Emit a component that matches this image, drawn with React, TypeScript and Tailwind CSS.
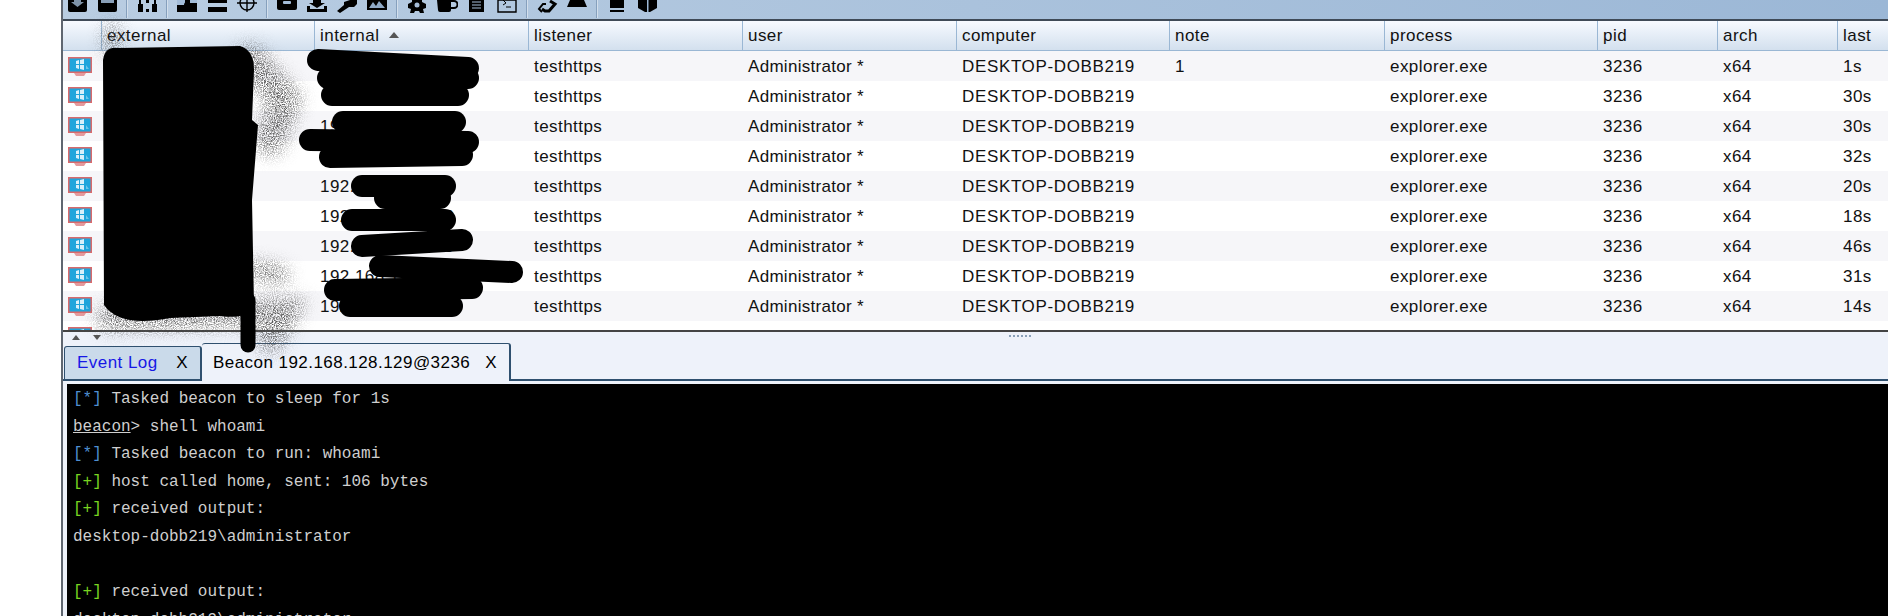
import type { ReactNode } from "react"

const columns = [
  { name: "", width: "w-[38px]" },
  { name: "external", width: "w-[213px]" },
  { name: "internal", width: "w-[214px]" },
  { name: "listener", width: "w-[214px]" },
  { name: "user", width: "w-[214px]" },
  { name: "computer", width: "w-[213px]" },
  { name: "note", width: "w-[215px]" },
  { name: "process", width: "w-[213px]" },
  { name: "pid", width: "w-[120px]" },
  { name: "arch", width: "w-[120px]" },
  { name: "last", width: "flex-1" },
]

const rows = [
  { internal: "", note: "1", last: "1s" },
  { internal: "", note: "", last: "30s" },
  { internal: "192.168.128.129", note: "", last: "30s" },
  { internal: "", note: "", last: "32s" },
  { internal: "192.168.128.129", note: "", last: "20s" },
  { internal: "192.168.128.129", note: "", last: "18s" },
  { internal: "192.168.128.129", note: "", last: "46s" },
  { internal: "192.168.128.129", note: "", last: "31s" },
  { internal: "192.168.128.129", note: "", last: "14s" },
  { internal: "", note: "", last: "" },
]

function MonitorIcon() {
  return (
    <svg width="26" height="22" viewBox="0 0 26 22">
      <rect x="1" y="1" width="24" height="16" fill="#d86a6c" />
      <rect x="2.5" y="2.5" width="21" height="13" fill="#1fa5dc" />
      <path d="M9 5l3-1v4H9zM13 4l4-1v5h-4zM9 9h3v4l-3-1zM13 9h4v5l-4-1z" fill="#d8f0fa" />
      <path d="M19 9l3 4h-3z" fill="#6cc3e8" />
      <path d="M7 17h12l-2 3H9z" fill="#e59a9c" />
    </svg>
  )
}

function Tool({ children }: { children: ReactNode }) {
  return (
    <svg className="shrink-0" width="21" height="14" viewBox="0 0 21 14">
      {children}
    </svg>
  )
}

function Sep() {
  return <div className="h-[18px] w-[1px] shrink-0 bg-[#d3dfec] shadow-[-1px_0_0_#86a0bd]" />
}

function Toolbar() {
  return (
    <div className="flex h-[21px] shrink-0 items-start gap-[9px] border-b-2 border-[#3f4a57] bg-gradient-to-r from-[#b9cde2] to-[#9bb7d6] pl-[4px]">
      <Tool><path d="M1 0h19v10a2 2 0 0 1-2 2H3a2 2 0 0 1-2-2z" fill="#000" /><path d="M7 0h7v2h3l-6.500 5L4 2h3z" fill="#7f93a8" /></Tool>
      <Tool><path d="M1 0h19v10a2 2 0 0 1-2 2H3a2 2 0 0 1-2-2z" fill="#000" /><rect x="4" y="0" width="13" height="3" fill="#8aa0b8" /></Tool>
      <Sep />
      <Tool><path d="M1 4h5v8H1zM15 4h5v8h-5z" fill="#000" /><path d="M3 5V0M18 5V0" stroke="#000" strokeWidth="2" /><path d="M9 0h3v3H9zM9 9h3v3H9z" fill="#000" /></Tool>
      <Sep />
      <Tool><path d="M0 0h20v12H0z" fill="#000" /><path d="M0 0h8v5H0zM13 0h7v3h-7z" fill="#a3bcd8" /><circle cx="10" cy="5" r="3" fill="#000" /></Tool>
      <Tool><path d="M1 0h19v3H1zM1 7h19v5H1z" fill="#000" /></Tool>
      <Tool><circle cx="10" cy="3" r="7" fill="none" stroke="#000" strokeWidth="1.400" /><path d="M10 0v12M0 3h20" stroke="#000" strokeWidth="1.400" /></Tool>
      <Sep />
      <Tool><path d="M0 0h20v8a2 2 0 0 1-2 2H2a2 2 0 0 1-2-2z" fill="#000" /><rect x="6" y="1" width="8" height="3" rx="1" fill="#a3bcd8" /></Tool>
      <Tool><path d="M6 0h8v3h4l-8 5-8-5h4z" fill="#000" /><path d="M0 6h3v3h14V6h3v6H0z" fill="#000" /></Tool>
      <Tool><path d="M13 0h7v4l-3 3h-5L3 13 0 11l7-6V2z" fill="#000" /></Tool>
      <Tool><path d="M0 0h20v10H0z" fill="#000" /><path d="M2 8l4-6 3 4 3-5 6 7z" fill="#8ea8c4" /></Tool>
      <Sep />
      <Tool><path d="M5 0h10v2l4 2v4l-3 1 1 4h-4l-1-2H8l-1 2H3l1-4-3-1V4l4-2z" fill="#000" /><circle cx="10" cy="5" r="2.500" fill="#a6bdd8" /></Tool>
      <Tool><path d="M0 0h14v10a2 2 0 0 1-2 2H3a2 2 0 0 1-2-2z" fill="#000" /><path d="M14 1h3a2 2 0 0 1 0 7h-3" fill="none" stroke="#000" strokeWidth="2" /></Tool>
      <Tool><path d="M2 0h15v12H2z" fill="#000" /><path d="M5 2h9M5 5h9M5 8h9" stroke="#a6bdd8" /></Tool>
      <Tool><path d="M1 0h18v12H1z" fill="none" stroke="#000" strokeWidth="1.400" /><path d="M6 0l3 3-3 2M9 7h5" stroke="#000" fill="none" /></Tool>
      <Sep />
      <Tool><path d="M13 1l5 3-6 7H8L5 9" fill="none" stroke="#000" strokeWidth="3" /><path d="M9 4H6l-4 5 3 3" fill="none" stroke="#000" strokeWidth="2" /></Tool>
      <Tool><path d="M3 0h14l3 7H0z" fill="#000" /></Tool>
      <Sep />
      <Tool><path d="M3 0h14v8H3z" fill="#000" /><path d="M3 10h14v2H3z" fill="#000" /></Tool>
      <Tool><path d="M1 0h19v8l-7 4H8L1 8z" fill="#000" /><path d="M10 0h1.500v12H10z" fill="#9db7d4" /></Tool>
    </div>
  )
}

function TableHeader() {
  return (
    <div className="flex h-[30px] shrink-0 border-b border-[#9ab7d4] bg-gradient-to-b from-[#f7faff] to-[#d3e0ee]">
      {columns.map((col, i) => (
        <div key={i} className={`${col.width} flex items-center gap-2.5 pl-[5px] ${i > 0 ? "border-l border-[#9ab7d4]" : ""}`}>
          {col.name}
          {col.name === "internal" && (
            <svg width="10" height="6" viewBox="0 0 10 6" className="mb-0.5">
              <path d="M5 0l5 6H0z" fill="#555" />
            </svg>
          )}
        </div>
      ))}
    </div>
  )
}

function TableRow({ internal, note, last, index }: { internal: string; note: string; last: string; index: number }) {
  const cells = ["", internal, "testhttps", "Administrator *", "DESKTOP-DOBB219", note, "explorer.exe", "3236", "x64", last]
  return (
    <div className={`flex h-[30px] shrink-0 items-center pt-[2px] ${index % 2 === 0 ? "bg-[#f6f6f9]" : "bg-white"}`}>
      <div className="w-[38px] pl-[4px]">
        <MonitorIcon />
      </div>
      {columns.slice(1).map((col, i) => (
        <div key={col.name} className={`${col.width} whitespace-nowrap pl-[6px] ${col.name === "computer" ? "tracking-[0.65px]" : col.name === "user" ? "tracking-[0.3px]" : ""}`}>
          {index < 9 ? cells[i] : ""}
        </div>
      ))}
    </div>
  )
}

function Scribble() {
  return (
    <svg className="pointer-events-none absolute inset-0" width="1888" height="616" viewBox="0 0 1888 616">
      <defs>
        <filter id="smear" x="-20%" y="-20%" width="140%" height="140%">
          <feGaussianBlur stdDeviation="8" result="soft" />
          <feTurbulence type="fractalNoise" baseFrequency="0.9" numOctaves="2" seed="4" result="noise" />
          <feColorMatrix in="noise" type="matrix" values="0 0 0 0 0  0 0 0 0 0  0 0 0 0 0  0 0 0 3 -1.100" result="grain" />
          <feComposite in="soft" in2="grain" operator="in" />
        </filter>
        <filter id="smearThin" x="-10%" y="-200%" width="120%" height="500%">
          <feGaussianBlur stdDeviation="2.500" result="soft" />
          <feTurbulence type="fractalNoise" baseFrequency="0.9" numOctaves="2" seed="8" result="noise" />
          <feColorMatrix in="noise" type="matrix" values="0 0 0 0 0  0 0 0 0 0  0 0 0 0 0  0 0 0 3 -0.6" result="grain" />
          <feComposite in="soft" in2="grain" operator="in" />
        </filter>
      </defs>
      <g filter="url(#smear)" fill="none" stroke="#555" strokeLinecap="round">
        <path d="M112 30 L112 50" strokeWidth="14" />
        <path d="M250 60 L285 100 L270 140" strokeWidth="30" />
        <path d="M255 270 L280 275" strokeWidth="18" />
        <path d="M110 318 L285 312 L270 340" strokeWidth="26" />
      </g>
      <path d="M8 322 L110 322" stroke="#666" strokeWidth="9" filter="url(#smearThin)" />
      <path
        d="M103 60 Q105 46 118 48 L240 46 Q254 50 254 70 L252 120 L258 125 L252 200 L254 305 Q250 320 220 316 L170 318 Q120 328 104 305 Z"
        fill="#000"
      />
      <path d="M248 300 L248 345" fill="none" stroke="#000" strokeWidth="15" strokeLinecap="round" />
      <g fill="none" stroke="#000" strokeWidth="22" strokeLinecap="round">
        <path d="M318 60 L468 68" />
        <path d="M328 78 L468 78" />
        <path d="M332 95 L458 95" />
        <path d="M343 122 L455 122" />
        <path d="M310 140 L468 142" />
        <path d="M330 157 L462 155" />
        <path d="M362 186 L445 186" />
        <path d="M385 198 L440 198" />
        <path d="M352 220 L445 220" />
        <path d="M362 246 L462 240" />
        <path d="M380 266 L512 272" />
        <path d="M335 290 L472 288" />
        <path d="M350 306 L452 306" />
      </g>
    </svg>
  )
}

function Tabs() {
  return (
    <div className="flex h-[49px] shrink-0 items-end border-b-2 border-[#2f506f] pl-[1px]">
      <div className="flex h-[33px] w-[138px] items-center justify-between rounded-t-[3px] border-t border-r-2 border-l border-[#2f506f] bg-[#cadaea] pr-[12px] pl-[12px] text-[#1717e6]">
        <span>Event Log</span>
        <span className="text-black">X</span>
      </div>
      <div className="-mb-[2px] flex h-[38px] w-[309px] items-center justify-between rounded-t-[3px] border-t border-r-2 border-[#2f506f] bg-[#eef2fa] pr-[12px] pl-[11px] text-black">
        <span>Beacon 192.168.128.129@3236</span>
        <span>X</span>
      </div>
    </div>
  )
}

function Line({ children }: { children?: ReactNode }) {
  return <div className="h-[27.6px] leading-[27.6px] whitespace-pre">{children}</div>
}

const Star = () => <span className="text-[#4f8fd0]">[*]</span>
const Plus = () => <span className="text-[#79d420]">[+]</span>

function Terminal() {
  return (
    <div className="mt-[3px] ml-[4px] flex-1 overflow-hidden bg-black pt-[2px] pl-[6px] font-['Liberation_Mono',monospace] text-[16px] tracking-normal text-[#cfcfcf]">
      <Line><Star /> Tasked beacon to sleep for 1s</Line>
      <Line><span className="underline">beacon</span>&gt; shell whoami</Line>
      <Line><Star /> Tasked beacon to run: whoami</Line>
      <Line><Plus /> host called home, sent: 106 bytes</Line>
      <Line><Plus /> received output:</Line>
      <Line>desktop-dobb219\administrator</Line>
      <Line />
      <Line><Plus /> received output:</Line>
      <Line>desktop-dobb219\administrator</Line>
    </div>
  )
}

export default function App() {
  return (
    <div className="relative h-[616px] w-[1888px] overflow-hidden bg-white">
      <div className="ml-[61px] flex h-full flex-col border-l-2 border-[#5f6670] font-['Liberation_Sans',sans-serif] text-[17px] tracking-[0.45px] text-[#111]">
        <Toolbar />
        <div className="flex h-[309px] shrink-0 flex-col overflow-hidden">
          <TableHeader />
          {rows.map((row, i) => (
            <TableRow key={i} index={i} internal={row.internal} note={row.note} last={row.last} />
          ))}
        </div>
        <div className="relative flex min-h-0 flex-1 flex-col border-t-2 border-[#444] bg-[#eef2fa]">
          <div className="absolute top-[3px] left-[9px] flex gap-[13px]">
            <svg width="8" height="5" viewBox="0 0 8 5"><path d="M4 0l4 5H0z" fill="#555" /></svg>
            <svg width="8" height="5" viewBox="0 0 8 5"><path d="M0 0h8L4 5z" fill="#555" /></svg>
          </div>
          <div className="absolute top-[2px] left-[945px] h-[4px] w-[24px] bg-[radial-gradient(#8aa0b8_1px,transparent_1px)] bg-[length:4px_4px]" />
          <Tabs />
          <Terminal />
        </div>
      </div>
      <Scribble />
    </div>
  )
}
